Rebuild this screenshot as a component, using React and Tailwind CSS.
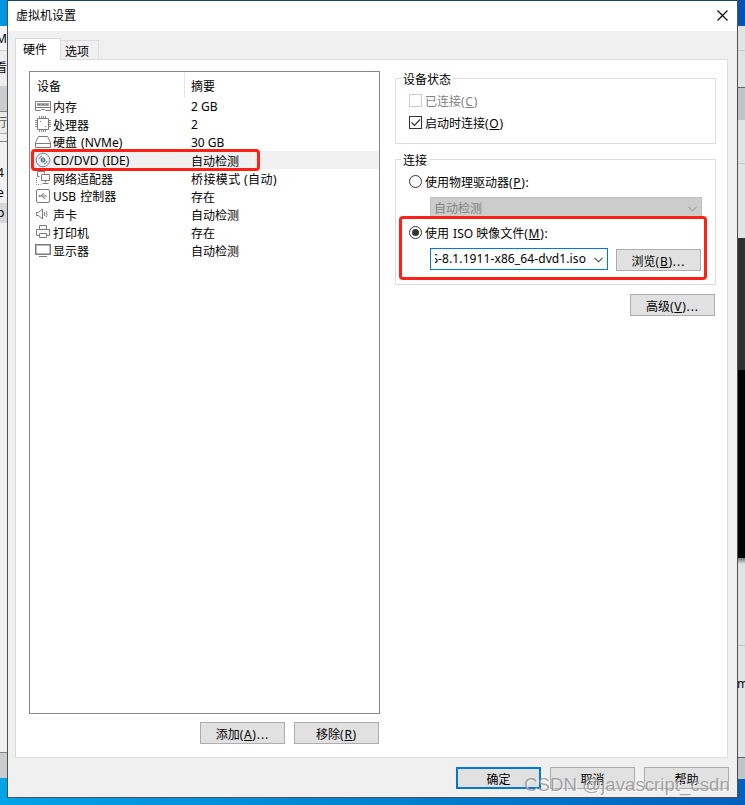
import React, { useState } from 'react';
import clsx from 'clsx';

const devices = [
  { id: 'memory', name: '内存', summary: '2 GB' },
  { id: 'cpu', name: '处理器', summary: '2' },
  { id: 'disk', name: '硬盘 (NVMe)', summary: '30 GB' },
  { id: 'cd', name: 'CD/DVD (IDE)', summary: '自动检测' },
  { id: 'net', name: '网络适配器', summary: '桥接模式 (自动)' },
  { id: 'usb', name: 'USB 控制器', summary: '存在' },
  { id: 'sound', name: '声卡', summary: '自动检测' },
  { id: 'printer', name: '打印机', summary: '存在' },
  { id: 'display', name: '显示器', summary: '自动检测' },
];

const icons = {
  memory: (
    <>
      <path d="M.5 3.5h15v9h-5l-1-1h-3l-1 1h-5z" />
      <path d="M2 6.500h12" strokeWidth="3" stroke="#a5a5a5" />
      <path d="M3 6.500h2M7 6.500h2M11 6.500h2" />
      <path d="M1 9.500h14" />
    </>
  ),
  cpu: (
    <>
      <path d="M2.500 2.500h11v11h-11z" />
      <path d="M4.500 0v2M6.500 0v2M8.500 0v2M10.500 0v2M4.500 14v2M6.500 14v2M8.500 14v2M10.500 14v2M0 4.500h2M0 6.500h2M0 8.500h2M0 10.500h2M14 4.500h2M14 6.500h2M14 8.500h2M14 10.500h2" strokeWidth=".9" />
      <path d="M5 5.500h1M10 10.500h1" />
    </>
  ),
  disk: <path d="M3.500 2.500h9l3 6v5H.5v-5zM.5 9.500h15" />,
  cd: (
    <g stroke="#6486a3">
      <circle cx="8" cy="8" r="6.800" />
      <circle cx="8" cy="8" r="1.600" strokeWidth="1.800" />
      <path d="M4 7a4.200 4.200 0 0 1 3-3M12 9a4.200 4.200 0 0 1-3 3" strokeWidth="1" />
    </g>
  ),
  net: (
    <>
      <path d="M4.500 6.500h-2v-5h7v2" />
      <path d="M6.500 4.500h8v6h-8zM10.500 10.500v2M7.500 13.500h6" />
      <path d="M1.500 8v6.500h4" strokeDasharray="1 1" />
    </>
  ),
  usb: (
    <>
      <rect x="1.500" y="1.500" width="13" height="13" rx="1.500" />
      <path d="M4 8h8M6 8l1.500-2h2M7 8l1.500 2h2" />
      <circle cx="4.500" cy="8" r=".6" />
    </>
  ),
  sound: (
    <>
      <path d="M1.500 6.500h2l4-3.500v10l-4-3.500h-2z" />
      <path d="M9.500 6v4M11.300 5c.8 1.800.8 4.200 0 6" strokeWidth=".9" />
    </>
  ),
  printer: (
    <>
      <path d="M4.500 5.500v-4h7v4M4.500 11.500h-3v-6h13v6h-3" />
      <path d="M4.500 9.500h7v4h-7z" />
    </>
  ),
  display: (
    <>
      <path d="M.75 2.750h14.500v9.500H.75z" strokeWidth="1.500" />
      <path d="M4 14.500h8" />
    </>
  ),
};

function DeviceIcon({ id }) {
  return (
    <svg className="w-4 h-4 shrink-0" viewBox="0 0 16 16" fill="none" stroke="#7b7b7b" strokeWidth="1">
      {icons[id]}
    </svg>
  );
}

// mnemonic suffix, e.g. (A)...
function Key({ k, tail }) {
  return (
    <span className="tracking-[0.7px]">
      (<u>{k}</u>){tail && <span className={tail === '...' ? 'tracking-[1px]' : ''}>{tail}</span>}
    </span>
  );
}

function Button({ children, primary, className }) {
  return (
    <button
      className={clsx(
        'w-[85px] h-[22px] shrink-0 bg-[#e1e1e1] leading-none pt-[3px] whitespace-nowrap',
        primary ? 'border-2 border-[#0078d7]' : 'border border-[#adadad]',
        className
      )}>
      {children}
    </button>
  );
}

function Chevron({ color }) {
  return (
    <svg className="w-[9px] h-[6px] shrink-0" viewBox="0 0 9 6" fill="none" stroke={color} strokeWidth="1.1">
      <path d="M.5 .8l4 4 4-4" />
    </svg>
  );
}

function Checkbox({ checked, disabled, onChange, children }) {
  return (
    <label className={clsx('flex items-center h-[13px] gap-[3px]', disabled && 'text-[#838383]')}>
      <input type="checkbox" className="sr-only" checked={checked} disabled={disabled} onChange={onChange} />
      <span className={clsx('w-[13px] h-[13px] border shrink-0', disabled ? 'border-[#cccccc]' : 'border-[#333]')}>
        {checked && (
          <svg viewBox="0 0 11 11" fill="none" stroke="#333" strokeWidth="1.2">
            <path d="M1.500 5.500l3 3 5.500-6" />
          </svg>
        )}
      </span>
      <span className="pt-[2px]">{children}</span>
    </label>
  );
}

function Radio({ checked, onChange, children }) {
  return (
    <label className="flex items-center h-[13px] gap-[3px]">
      <input type="radio" name="source" className="sr-only" checked={checked} onChange={onChange} />
      <span className="w-[13px] h-[13px] rounded-full border border-[#333] shrink-0 flex items-center justify-center">
        {checked && <span className="w-[7px] h-[7px] rounded-full bg-[#333]" />}
      </span>
      <span className="pt-[2px]">{children}</span>
    </label>
  );
}

function Group({ title, className, children }) {
  return (
    <fieldset className={clsx('w-[321px] border border-[#dcdcdc] pl-[13px]', className)}>
      <legend className="h-[15px] leading-[17px] px-[2px] -ml-[8px]">{title}</legend>
      {children}
    </fieldset>
  );
}

// sliver of the main window left of the dialog
function LeftEdge() {
  return (
    <div className="w-[7px] h-[798px] overflow-hidden flex flex-col bg-[#f0f0f0] shrink-0">
      <div className="h-[26px] bg-[#0096e4]" />
      <div className="h-[25px] bg-[#f3f3f3] border-b border-[#d0d0d0] leading-[25px] text-[12px] -indent-[4px]">Mw</div>
      <div className="h-[35px] leading-[33px] bg-[#ededed] -indent-[5px]">看</div>
      <div className="h-[26px] bg-[#cbccce] border-b border-[#85868c]" />
      <div className="h-[22px] bg-[#e9e9e9] border-b border-[#aaa] leading-[22px] -indent-[5px] text-[#555]">行</div>
      <div className="h-[8px] border-b border-[#85868c]" />
      <div className="h-[21px]" />
      <div className="h-[20px] leading-[20px] -indent-[3px]">4</div>
      <div className="h-[20px] leading-[20px] -indent-[3px]">e</div>
      <div className="h-[20px] leading-[20px] -indent-[3px] bg-[#d7d7d7]">p</div>
      <div className="flex-1 border-b border-[#85868c]" />
      <div className="h-[25px] bg-[#cbccce]" />
      <div className="h-[20px] bg-[#00a2e8]" />
    </div>
  );
}

function RightEdge() {
  return (
    <div className="w-[7px] h-[798px] overflow-hidden flex flex-col bg-[#e3e3e3] shrink-0">
      <div className="h-[26px] bg-[#0351b4]" />
      <div className="h-[25px] border-b border-[#c8c8c8]" />
      <div className="h-[37px] border-b-1 border-[#606060]" />
      <div className="h-[32px] bg-[#c2c3c6]" />
      <div className="h-[44px] border-b border-[#c4c4c4]" />
      <div className="h-[74px]" />
      <div className="h-[132px] bg-[#303030]" />
      <div className="h-[188px] bg-black" />
      <div className="h-[88px] border-b border-[#c4c4c4] bg-linear-to-b from-[#777] from-0% to-[#e3e3e3] to-7%" />
      <div className="h-[76px] leading-[76px] -indent-px">m</div>
      <div className="h-[36px] border-b border-[#606060]" />
      <div className="h-[21px] bg-[#c2c3c6]" />
      <div className="flex-1 bg-[#0361bd]" />
    </div>
  );
}

export default function App() {
  const [selected, setSelected] = useState('cd');
  const [autoConnect, setAutoConnect] = useState(true);
  const [source, setSource] = useState('iso');

  return (
    <div className="relative w-[745px] h-[805px] overflow-hidden flex flex-col text-[12px] text-black font-['Noto_Sans','Noto_Sans_CJK_SC',sans-serif]">
      <div className="flex">
        <LeftEdge />

        <div className="w-[731px] h-[798px] shrink-0 bg-[#f0f0f0] border border-[#4c4f53] border-t-[#174668] flex flex-col">
          <div className="h-[30px] shrink-0 bg-white flex items-center justify-between pl-[8px] pr-[9px]">
            <span>虚拟机设置</span>
            <svg className="w-[11px] h-[11px] mb-[2px]" viewBox="0 0 11 11" fill="none" stroke="#000" strokeWidth="1.1">
              <path d="M.5 .5l10 10M10.500 .5l-10 10" />
            </svg>
          </div>

          {/* Tabs */}
          <div className="flex items-end pl-[7px] h-[29px] shrink-0 relative z-10 -mb-px">
            <div className="w-[46px] h-[22px] bg-white border border-b-0 border-[#dcdcdc] pl-[7px] leading-[22px]">硬件</div>
            <div className="w-[38px] h-[20px] bg-[#f0f0f0] border border-l-0 border-[#dcdcdc] pl-[4px] leading-[22px]">选项</div>
          </div>

          <div className="ml-[7px] w-[713px] h-[699px] shrink-0 bg-white border border-[#dcdcdc] pl-[13px] pt-[11px] flex gap-[15px]">
            <div className="w-[351px]">
              {/* Device list */}
              <div className="h-[643px] border border-[#828790]">
                <div className="flex h-[25px] leading-[27px]">
                  <div className="w-[155px] pl-[7px] border-r border-[#e5e5e5] mt-px">设备</div>
                  <div className="pl-[6px] mt-px">摘要</div>
                </div>
                {devices.map(d => (
                  <div
                    key={d.id}
                    onClick={() => setSelected(d.id)}
                    className={clsx('flex items-center h-[18px] pl-[5px]', selected === d.id && 'bg-[#f0f0f0]')}>
                    <DeviceIcon id={d.id} />
                    <span className={clsx('w-[140px] pl-[2px] [word-spacing:1px]', /[A-Z]/.test(d.name) ? 'pt-[2px]' : 'pt-[3px]')}>{d.name}</span>
                    <span className={clsx(/\d/.test(d.summary) ? 'pt-[2px]' : 'pt-[3px]', d.id === 'net' && 'tracking-[0.4px]')}>{d.summary}</span>
                  </div>
                ))}
              </div>
              <div className="flex justify-end gap-[9px] mt-[8px] pr-px">
                <Button>添加<Key k="A" tail="..." /></Button>
                <Button>移除<Key k="R" /></Button>
              </div>
            </div>

            <div className="w-[321px]">
              <Group title="设备状态" className="h-[73px]">
                <div className="flex flex-col gap-[9px] pt-[8px]">
                  <Checkbox disabled checked={false}>已连接<Key k="C" /></Checkbox>
                  <Checkbox checked={autoConnect} onChange={() => setAutoConnect(!autoConnect)}>
                    启动时连接<Key k="O" />
                  </Checkbox>
                </div>
              </Group>

              <Group title="连接" className="h-[133px] mt-[8px]">
                <div className="flex flex-col gap-[9px] pt-[8px]">
                  <Radio checked={source === 'physical'} onChange={() => setSource('physical')}>
                    使用物理驱动器<Key k="P" tail=":" />
                  </Radio>
                  <div className="ml-[21px] w-[272px] h-[20px] bg-[#cccccc] border border-[#bfbfbf] text-[#838383] flex items-center justify-between pl-[3px] pr-[4px]">
                    <span className="pt-[4px]">自动检测</span>
                    <span className="pt-[3px]"><Chevron color="#a0a0a0" /></span>
                  </div>
                  <Radio checked={source === 'iso'} onChange={() => setSource('iso')}>
                    <span className="[word-spacing:1px]">使用 ISO</span> 映像文件<Key k="M" tail=":" />
                  </Radio>
                  <div className="flex ml-[21px] gap-[8px]">
                    <div className="w-[178px] h-[22px] bg-white border border-[#0078d7] flex items-center justify-between pl-[4px] pr-[4px]">
                      <div className="w-[151px] overflow-hidden flex justify-end whitespace-nowrap">
                        <span className="tracking-[0.1px]">S-8.1.1911-x86_64-dvd1.iso</span>
                      </div>
                      <span className="pt-px"><Chevron color="#444" /></span>
                    </div>
                    <Button className="mt-px">浏览<Key k="B" tail="..." /></Button>
                  </div>
                </div>
              </Group>

              <div className="flex justify-end mt-[9px] pr-px">
                <Button>高级<Key k="V" tail="..." /></Button>
              </div>
            </div>
          </div>

          <div className="flex justify-end gap-[9px] mt-[9px] pr-[8px]">
            <Button primary className="pt-[2px]">确定</Button>
            <Button>取消</Button>
            <Button>帮助</Button>
          </div>
        </div>

        <RightEdge />
      </div>

      <div className="h-[7px] bg-linear-to-r from-[#00a2e8] via-[#0083cf] to-[#0361bd]" />

      {/* highlight marks */}
      <div className="absolute left-[31px] top-[149px] w-[229px] h-[22px] border-3 border-[#ff2116] rounded-[4px] pointer-events-none" />
      <div className="absolute left-[399px] top-[216px] w-[308px] h-[64px] border-3 border-[#ff2116] rounded-[4px] pointer-events-none" />

      <div className="absolute left-[524px] top-[773px] text-[18.7px] leading-[24px] whitespace-nowrap text-[#909090]/80 [text-shadow:1px_1px_0_#ffffffaa] font-['Liberation_Sans',sans-serif] pointer-events-none">
        CSDN @javascript_csdn
      </div>
    </div>
  );
}
